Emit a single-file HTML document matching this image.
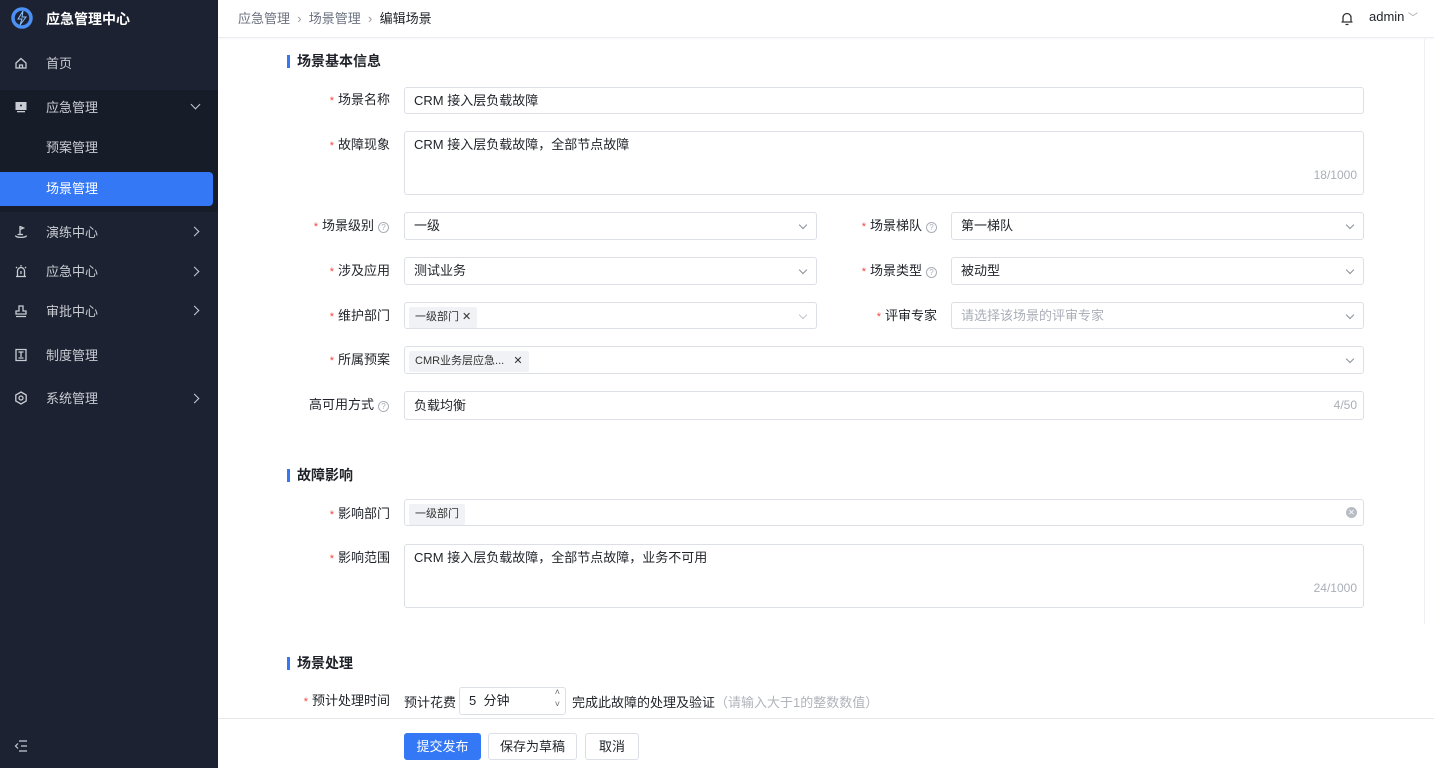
<!DOCTYPE html>
<html><head><meta charset="utf-8"><style>
*{box-sizing:border-box;margin:0;padding:0}
body{width:1434px;height:768px;overflow:hidden;font-family:"Liberation Sans","Noto Sans CJK SC",sans-serif;font-size:13px;color:#1f2329;background:#fff;position:relative}
.sb{position:absolute;left:0;top:0;width:218px;height:768px;background:#1c2231}
.sub{position:absolute;left:0;top:90px;width:218px;height:122px;background:#171c29}
.mi{position:absolute;left:46px;color:#c9ccd3;font-size:13px;line-height:16px}
.ic{position:absolute;left:14px;width:14px;height:14px}
.act{position:absolute;left:0;top:172px;width:213px;height:34px;background:#3478f6;border-radius:0 4px 4px 0}
.hd{position:absolute;left:218px;top:0;width:1216px;height:38px;border-bottom:1px solid #e9ecf3;box-shadow:0 1px 3px rgba(0,0,0,.04)}
.a{position:absolute}
.lb{position:absolute;text-align:right;color:#1f2329;font-size:13px;line-height:16px}
.lb .s{color:#f5463e;margin-right:4px;font-size:11px}
.q{display:inline-block;width:11px;height:11px;border:1px solid #a9aeb8;border-radius:50%;font-size:8px;line-height:9px;text-align:center;color:#a9aeb8;margin-left:4px;vertical-align:0}
.in{position:absolute;border:1px solid #dcdfe6;border-radius:3px;background:#fff;padding-left:9px;font-size:13px;line-height:25px}
.chev{position:absolute;right:10px;top:9px;width:6px;height:6px;border-right:1px solid #8a8f99;border-bottom:1px solid #8a8f99;transform:rotate(45deg)}
.tag{display:inline-block;background:#f0f2f5;font-size:11px;height:21px;line-height:21px;padding:0 6px;border-radius:2px;color:#333;margin-top:2px;margin-left:-6px}
.cnt{position:absolute;right:6px;bottom:6px;color:#a9aeb8;font-size:12px}
.sec{position:absolute;left:287px;font-weight:bold;font-size:14px;padding-left:7px;border-left:3px solid #3478f6;line-height:13px}
.btn{position:absolute;top:733px;height:27px;border:1px solid #dcdfe6;border-radius:3px;font-size:13px;line-height:25px;text-align:center;background:#fff}
</style></head><body>
<div class="sb">
 <div class="sub"></div>
 <svg class="a" style="left:11px;top:7px" width="22" height="22" viewBox="0 0 22 22"><circle cx="11" cy="11" r="9" fill="none" stroke="#4a90f5" stroke-width="3.5"/><path d="M12 4 L7 12 H11 L9 18 L15 10 H11 Z" fill="#1c2231" stroke="#8cc0ff" stroke-width="1"/></svg>
 <div class="a" style="left:46px;top:9px;color:#fff;font-size:14px;font-weight:bold">应急管理中心</div>
 <svg class="ic" style="top:56px" viewBox="0 0 14 14"><path d="M2 7 L7 2.5 L12 7 V12 H2 Z M5.5 12 V9 H8.5 V12" fill="none" stroke="#c9ccd3" stroke-width="1.3"/></svg>
 <div class="mi" style="top:56px">首页</div>
 <svg class="ic" style="top:100px" viewBox="0 0 14 14"><rect x="1.5" y="2" width="11" height="8" fill="#c9ccd3"/><rect x="3" y="11" width="8" height="1.3" fill="#c9ccd3"/><circle cx="7" cy="5.5" r="1" fill="#1c2231"/></svg>
 <div class="mi" style="top:100px">应急管理</div>
 <div class="a" style="left:192px;top:101px;width:7px;height:7px;border-right:1.3px solid #c9ccd3;border-bottom:1.3px solid #c9ccd3;transform:rotate(45deg)"></div>
 <div class="mi" style="top:140px">预案管理</div>
 <div class="act"></div>
 <div class="mi" style="top:181px;color:#fff">场景管理</div>
 <svg class="ic" style="top:225px" viewBox="0 0 14 14"><path d="M6 1 V9 M6 1.5 L9.5 3 L6 4.5 M1.5 10.5 C1.5 13 12.5 13 12.5 10.5 M3.5 9.5 H9" fill="none" stroke="#c9ccd3" stroke-width="1.3"/></svg>
 <div class="mi" style="top:225px">演练中心</div>
 <svg class="ic" style="top:264px" viewBox="0 0 14 14"><path d="M3.5 12 V7 A3.5 3.5 0 0 1 10.5 7 V12 M2 12.5 H12 M7 1 V2.5 M2 3 L3 4 M12 3 L11 4 M7 7 V10" fill="none" stroke="#c9ccd3" stroke-width="1.3"/></svg>
 <div class="mi" style="top:264px">应急中心</div>
 <svg class="ic" style="top:304px" viewBox="0 0 14 14"><path d="M5 2 H9 V7 H12 V10 H2 V7 H5 Z M2 12.5 H12" fill="none" stroke="#c9ccd3" stroke-width="1.3"/></svg>
 <div class="mi" style="top:304px">审批中心</div>
 <svg class="ic" style="top:348px" viewBox="0 0 14 14"><path d="M2 1.5 H12 V12.5 H2 Z M4.5 4 H9.5 M7 4 V9 M4.5 10 H9.5" fill="none" stroke="#c9ccd3" stroke-width="1.3"/></svg>
 <div class="mi" style="top:348px">制度管理</div>
 <svg class="ic" style="top:391px" viewBox="0 0 14 14"><path d="M7 1 L12.2 4 V10 L7 13 L1.8 10 V4 Z" fill="none" stroke="#c9ccd3" stroke-width="1.3"/><circle cx="7" cy="7" r="2" fill="none" stroke="#c9ccd3" stroke-width="1.3"/></svg>
 <div class="mi" style="top:391px">系统管理</div>
 <div class="a" style="left:191px;top:228px;width:7px;height:7px;border-right:1.3px solid #c9ccd3;border-top:1.3px solid #c9ccd3;transform:rotate(45deg)"></div>
 <div class="a" style="left:191px;top:268px;width:7px;height:7px;border-right:1.3px solid #c9ccd3;border-top:1.3px solid #c9ccd3;transform:rotate(45deg)"></div>
 <div class="a" style="left:191px;top:307px;width:7px;height:7px;border-right:1.3px solid #c9ccd3;border-top:1.3px solid #c9ccd3;transform:rotate(45deg)"></div>
 <div class="a" style="left:191px;top:395px;width:7px;height:7px;border-right:1.3px solid #c9ccd3;border-top:1.3px solid #c9ccd3;transform:rotate(45deg)"></div>
 <svg class="a" style="left:14px;top:740px" width="14" height="12" viewBox="0 0 14 12"><path d="M5 1 H13 M7 6 H13 M5 11 H13 M4 3.5 L1.5 6 L4 8.5" fill="none" stroke="#c9ccd3" stroke-width="1.2"/></svg>
</div>
<div class="hd">
 <div class="a" style="left:20px;top:8px;color:#6b7280">应急管理 <span style="color:#999">&nbsp;›&nbsp;</span> 场景管理 <span style="color:#999">&nbsp;›&nbsp;</span> <span style="color:#1f2329">编辑场景</span></div>
 <svg class="a" style="left:1122px;top:11px" width="14" height="15" viewBox="0 0 14 15"><path d="M3 11 V6.5 A4 4 0 0 1 11 6.5 V11 Z M1.5 11 H12.5 M5.5 13.5 H8.5" fill="none" stroke="#333" stroke-width="1.3"/></svg>
 <div class="a" style="left:1151px;top:9px;font-size:13px">admin <span style="color:#999;font-size:10px">﹀</span></div>
</div>
<div class="a" style="left:1424px;top:39px;width:1px;height:585px;background:#eceef2"></div>

<div class="sec" style="top:55px">场景基本信息</div>
<div class="lb" style="right:1044px;top:92px"><span class="s">*</span>场景名称</div>
<div class="in" style="left:404px;top:87px;width:960px;height:27px">CRM 接入层负载故障</div>
<div class="lb" style="right:1044px;top:137px"><span class="s">*</span>故障现象</div>
<div class="in" style="left:404px;top:131px;width:960px;height:64px;line-height:26px">CRM 接入层负载故障，全部节点故障<span class="cnt">18/1000</span></div>

<div class="lb" style="right:1045px;top:218px"><span class="s">*</span>场景级别<span class="q">?</span></div>
<div class="in" style="left:404px;top:212px;width:413px;height:28px">一级<span class="chev"></span></div>
<div class="lb" style="right:497px;top:218px"><span class="s">*</span>场景梯队<span class="q">?</span></div>
<div class="in" style="left:951px;top:212px;width:413px;height:28px">第一梯队<span class="chev"></span></div>

<div class="lb" style="right:1044px;top:263px"><span class="s">*</span>涉及应用</div>
<div class="in" style="left:404px;top:257px;width:413px;height:28px">测试业务<span class="chev"></span></div>
<div class="lb" style="right:497px;top:263px"><span class="s">*</span>场景类型<span class="q">?</span></div>
<div class="in" style="left:951px;top:257px;width:413px;height:28px">被动型<span class="chev"></span></div>

<div class="lb" style="right:1044px;top:308px"><span class="s">*</span>维护部门</div>
<div class="in" style="left:404px;top:302px;width:413px;height:27px;padding-left:10px"><span class="tag">一级部门 ✕</span><span class="chev" style="border-color:#c0c4cc"></span></div>
<div class="lb" style="right:497px;top:308px"><span class="s">*</span>评审专家</div>
<div class="in" style="left:951px;top:302px;width:413px;height:27px;color:#a9aeb8">请选择该场景的评审专家<span class="chev"></span></div>

<div class="lb" style="right:1044px;top:352px"><span class="s">*</span>所属预案</div>
<div class="in" style="left:404px;top:346px;width:960px;height:28px;padding-left:10px"><span class="tag">CMR业务层应急... &nbsp;&nbsp;✕</span><span class="chev"></span></div>

<div class="lb" style="right:1045px;top:397px">高可用方式<span class="q">?</span></div>
<div class="in" style="left:404px;top:391px;width:960px;height:29px;line-height:27px">负载均衡<span class="cnt" style="bottom:0">4/50</span></div>

<div class="sec" style="top:469px">故障影响</div>
<div class="lb" style="right:1044px;top:506px"><span class="s">*</span>影响部门</div>
<div class="in" style="left:404px;top:499px;width:960px;height:27px;padding-left:10px"><span class="tag">一级部门</span><span class="a" style="right:6px;top:7px;width:11px;height:11px;border-radius:50%;background:#b8bcc4;color:#fff;font-size:8px;line-height:11px;text-align:center">✕</span></div>
<div class="lb" style="right:1044px;top:550px"><span class="s">*</span>影响范围</div>
<div class="in" style="left:404px;top:544px;width:960px;height:64px;line-height:26px">CRM 接入层负载故障，全部节点故障，业务不可用<span class="cnt">24/1000</span></div>

<div class="sec" style="top:657px">场景处理</div>
<div class="lb" style="right:1044px;top:693px"><span class="s">*</span>预计处理时间</div>
<div class="a" style="left:404px;top:692px">预计花费</div>
<div class="in" style="left:459px;top:687px;width:107px;height:28px">5 &nbsp;分钟<span class="a" style="right:5px;top:-2px;font-size:9px;color:#666;line-height:12px">˄<br>˅</span></div>
<div class="a" style="left:572px;top:692px">完成此故障的处理及验证<span style="color:#b0b4bb">（请输入大于1的整数数值）</span></div>

<div class="a" style="left:218px;top:718px;width:1216px;height:1px;background:#e6e8ec"></div>
<div class="btn" style="left:404px;width:77px;background:#3478f6;border-color:#3478f6;color:#fff">提交发布</div>
<div class="btn" style="left:488px;width:89px">保存为草稿</div>
<div class="btn" style="left:585px;width:54px">取消</div>
</body></html>
